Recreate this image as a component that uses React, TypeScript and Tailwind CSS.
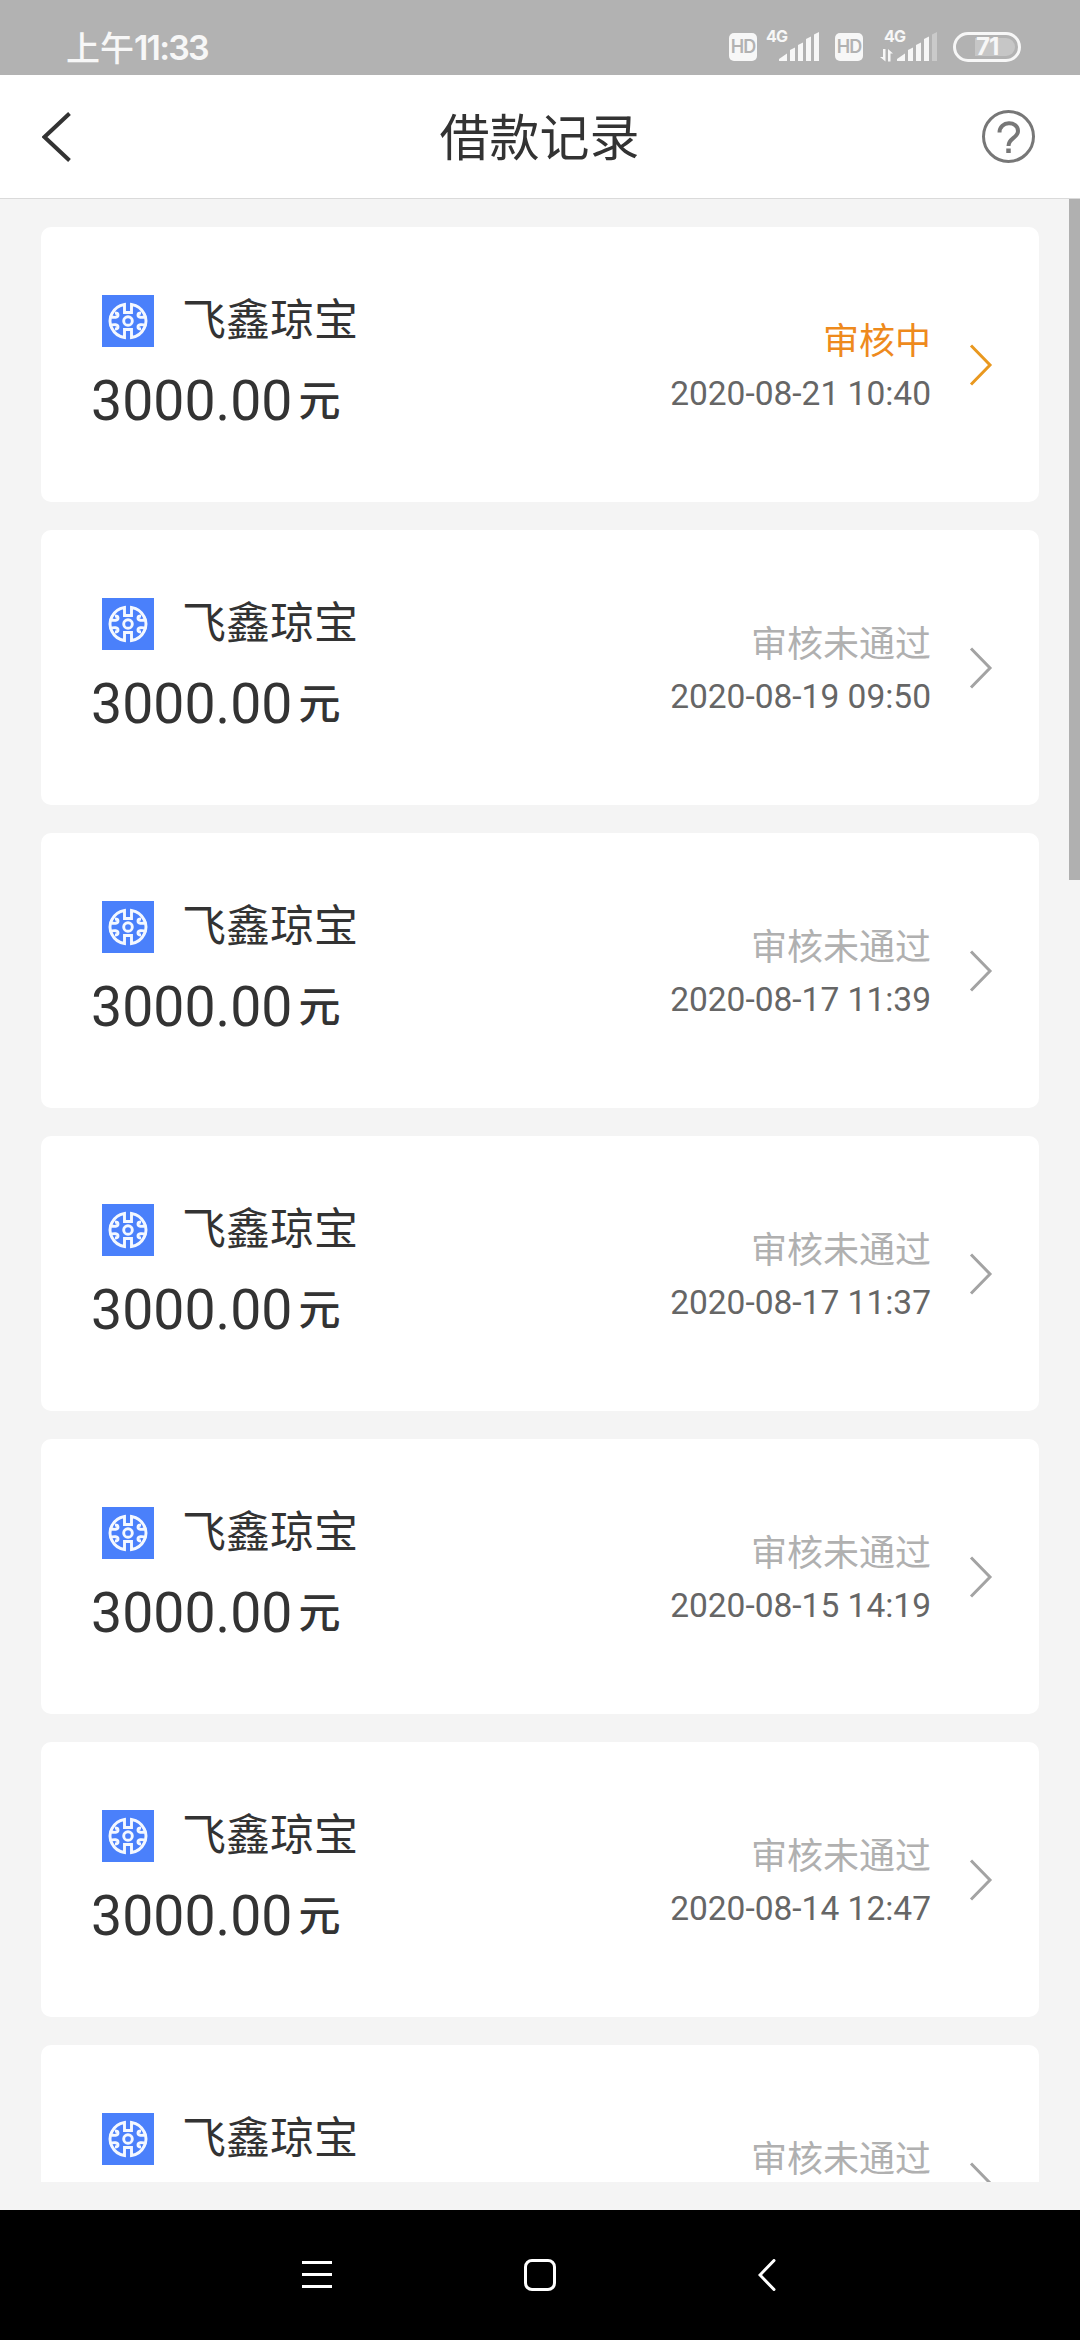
import React from 'react';

interface LoanRecord {
  id: number;
  name: string;
  amount?: string;
  status: string;
  pending: boolean;
  time?: string;
}

const records: LoanRecord[] = [
  { id: 1, name: '飞鑫琼宝', amount: '3000.00', status: '审核中', pending: true, time: '2020-08-21 10:40' },
  { id: 2, name: '飞鑫琼宝', amount: '3000.00', status: '审核未通过', pending: false, time: '2020-08-19 09:50' },
  { id: 3, name: '飞鑫琼宝', amount: '3000.00', status: '审核未通过', pending: false, time: '2020-08-17 11:39' },
  { id: 4, name: '飞鑫琼宝', amount: '3000.00', status: '审核未通过', pending: false, time: '2020-08-17 11:37' },
  { id: 5, name: '飞鑫琼宝', amount: '3000.00', status: '审核未通过', pending: false, time: '2020-08-15 14:19' },
  { id: 6, name: '飞鑫琼宝', amount: '3000.00', status: '审核未通过', pending: false, time: '2020-08-14 12:47' },
  { id: 7, name: '飞鑫琼宝', status: '审核未通过', pending: false },
];

function HdBadge() {
  return (
    <div className="flex h-7 w-7 items-center justify-center rounded-[5px] bg-[#f7f7f7] font-['Inter',sans-serif] text-[18px] leading-[28px] font-semibold tracking-[-1px] text-[#b2b2b2]">
      HD
    </div>
  );
}

function Signal({ weak, data }: { weak?: boolean; data?: boolean }) {
  return (
    <svg className="h-[33px] w-[58px] overflow-visible" viewBox="0 0 58 33" fill="#f7f7f7">
      <text x="4" y="12" fontFamily="Inter, sans-serif" fontSize="16" fontWeight="700" textLength="22">
        4G
      </text>
      {data && (
        <g>
          <path d="M3 19h2.500v12.500L0 27h3z" />
          <path d="M8 31.500V19l5 4.500h-2.500v8z" />
        </g>
      )}
      <path d="M17 31v-2l8-5.500V31z" />
      <path d="M28 31V20l5-2.500V31z" />
      <path d="M36 31V15l5-2.500V31z" />
      <path d="M44 31V9l5-2.500V31z" />
      <path d="M52 31V4.500l5-2.500V31z" opacity={weak ? 0.35 : 1} />
    </svg>
  );
}

function StatusBar() {
  return (
    <div className="flex h-[75px] shrink-0 items-start justify-between bg-[#b2b2b2] pr-[59px] pl-[66px] text-[#f7f7f7]">
      <div className="flex pt-[30px] leading-[34px]">
        <span className="font-['Noto_Sans_CJK_SC',sans-serif] text-[34px] font-medium">上午</span>
        <span className="pt-px font-['Inter',sans-serif] text-[34px] font-semibold tracking-[-1.8px]">11:33</span>
      </div>
      <div className="flex items-start pt-[30px]">
        <div className="mt-[3px]">
          <HdBadge />
        </div>
        <div className="ml-[5px]">
          <Signal />
        </div>
        <div className="mt-[3px] ml-[15px]">
          <HdBadge />
        </div>
        <div className="ml-[17px]">
          <Signal data weak />
        </div>
        <div className="mt-[2px] ml-[15px] flex h-[30px] w-[68px] items-center justify-end rounded-full border-[3px] border-[#f7f7f7] pr-[3px]">
          <div className="flex h-[18px] w-10 items-center rounded-r-[9px] bg-[#c6c6c6] pl-px font-['Inter',sans-serif] text-[24px] leading-[30px] font-bold tracking-[-1px]">
            71
          </div>
        </div>
      </div>
    </div>
  );
}

function Header() {
  return (
    <div className="flex h-[124px] shrink-0 items-center justify-between border-b border-[#dadada] bg-white pr-[45px] pl-[42px]">
      <svg className="h-[50px] w-[55px]" viewBox="0 0 55 50" fill="none" stroke="#333" strokeWidth="4">
        <path d="M27.500 1.500L2.500 25l25 23.500" />
      </svg>
      <h1 className="pb-[5px] font-['Noto_Sans_CJK_SC',sans-serif] text-[50px] leading-[50px] text-[#333]">借款记录</h1>
      <svg className="h-[53px] w-[53px]" viewBox="0 0 53 53" fill="none" stroke="#777">
        <circle cx="26.500" cy="26.500" r="25" strokeWidth="3" />
        <path d="M17.500 22.500c0-12 18.500-12 18.500-1.500 0 7-9.500 7-9.500 15" strokeWidth="4" />
        <path d="M26.500 38.500v4.500" strokeWidth="4.500" />
      </svg>
    </div>
  );
}

function Logo() {
  return (
    <svg className="mt-px ml-[11px] h-[52px] w-[52px]" viewBox="0 0 52 52" fill="none" stroke="#f4f8ff" strokeWidth="2.900">
      <rect width="52" height="52" fill="#4a80fb" stroke="none" />
      <circle cx="26" cy="26" r="4.300" />
      {/* coin rim, split by the top and bottom notches */}
      <path d="M22.500 9.500v8h7v-8c6 1 10.500 4.800 12.800 9.500 2.200 4.500 2.200 9.500 0 14-2.300 4.700-6.800 8.500-12.800 9.500v-8h-7v8c-6-1-10.500-4.800-12.800-9.500-2.200-4.500-2.200-9.500 0-14 2.300-4.700 6.800-8.500 12.800-9.500z" />
      <path d="M7.500 21.500c5 1.500 8.500 1 8.500-1.500 0-1.500-1.200-2-3-2M7.500 30.500c5-1.500 8.500-1 8.500 1.500 0 1.500-1.200 2-3 2M44.500 21.500c-5 1.500-8.500 1-8.500-1.500 0-1.500 1.200-2 3-2M44.500 30.500c-5-1.500-8.500-1-8.500 1.500 0 1.500 1.200 2 3 2" />
    </svg>
  );
}

function RecordCard({ record }: { record: LoanRecord }) {
  return (
    <div className="flex h-[275px] shrink-0 justify-between rounded-[10px] bg-white pr-[46px] pl-[50px]">
      <div className="pt-[67px] text-[#333]">
        <div className="flex h-[76px] items-start">
          <Logo />
          <span className="ml-7 pt-px font-['Noto_Sans_CJK_SC',sans-serif] text-[44px] leading-[44px]">{record.name}</span>
        </div>
        {record.amount && (
          <div className="flex items-start leading-[56px]">
            <span className="pt-1 font-['Roboto',sans-serif] text-[55.400px]">{record.amount}</span>
            <span className="ml-[6px] font-['Noto_Sans_CJK_SC',sans-serif] text-[42px] font-medium">元</span>
          </div>
        )}
      </div>
      <div className="flex items-center">
        <div className="flex h-full flex-col items-end pt-[93px]">
          <span
            className={`font-['Noto_Sans_CJK_SC',sans-serif] text-[36px] leading-[36px] ${
              record.pending ? 'text-[#ee8a1d]' : 'text-[#b0b0b0]'
            }`}
          >
            {record.status}
          </span>
          {record.time && (
            <span className="mt-[21px] font-['Roboto',sans-serif] text-[33.500px] leading-[34px] text-[#666]">
              {record.time}
            </span>
          )}
        </div>
        <svg
          className="ml-[38px] h-[42px] w-6"
          viewBox="0 0 24 42"
          fill="none"
          stroke={record.pending ? '#e9981f' : '#a3a3a3'}
          strokeWidth="3"
        >
          <path d="M2 1.500L21 21 2 40.500" />
        </svg>
      </div>
    </div>
  );
}

function NavBar() {
  return (
    <div className="flex h-[130px] shrink-0 items-center bg-black pl-[302px]">
      <svg className="h-8 w-[30px]" viewBox="0 0 30 32" stroke="#fff" strokeWidth="3">
        <path d="M0 3.500h30M0 15.500h30M0 27.500h30" />
      </svg>
      <div className="ml-[192px] h-8 w-8 rounded-[8px] border-[3px] border-white" />
      <svg className="ml-[202px] h-8 w-[18px]" viewBox="0 0 18 32" fill="none" stroke="#fff" strokeWidth="3" strokeLinecap="round">
        <path d="M16 1.500L2 16l14 14.500" />
      </svg>
    </div>
  );
}

export default function App() {
  return (
    <div className="flex h-[2340px] w-[1080px] flex-col overflow-hidden bg-[#f4f4f4]">
      <StatusBar />
      <Header />
      <div className="relative min-h-0 flex-1 pb-7">
        <div className="flex h-full flex-col gap-7 overflow-hidden px-[41px] pt-7">
          {records.map((record) => (
            <RecordCard key={record.id} record={record} />
          ))}
        </div>
        {/* scrollbar thumb */}
        <div className="absolute top-0 right-0 h-[681px] w-[11px] bg-[#b0b0b0]" />
      </div>
      <NavBar />
    </div>
  );
}
